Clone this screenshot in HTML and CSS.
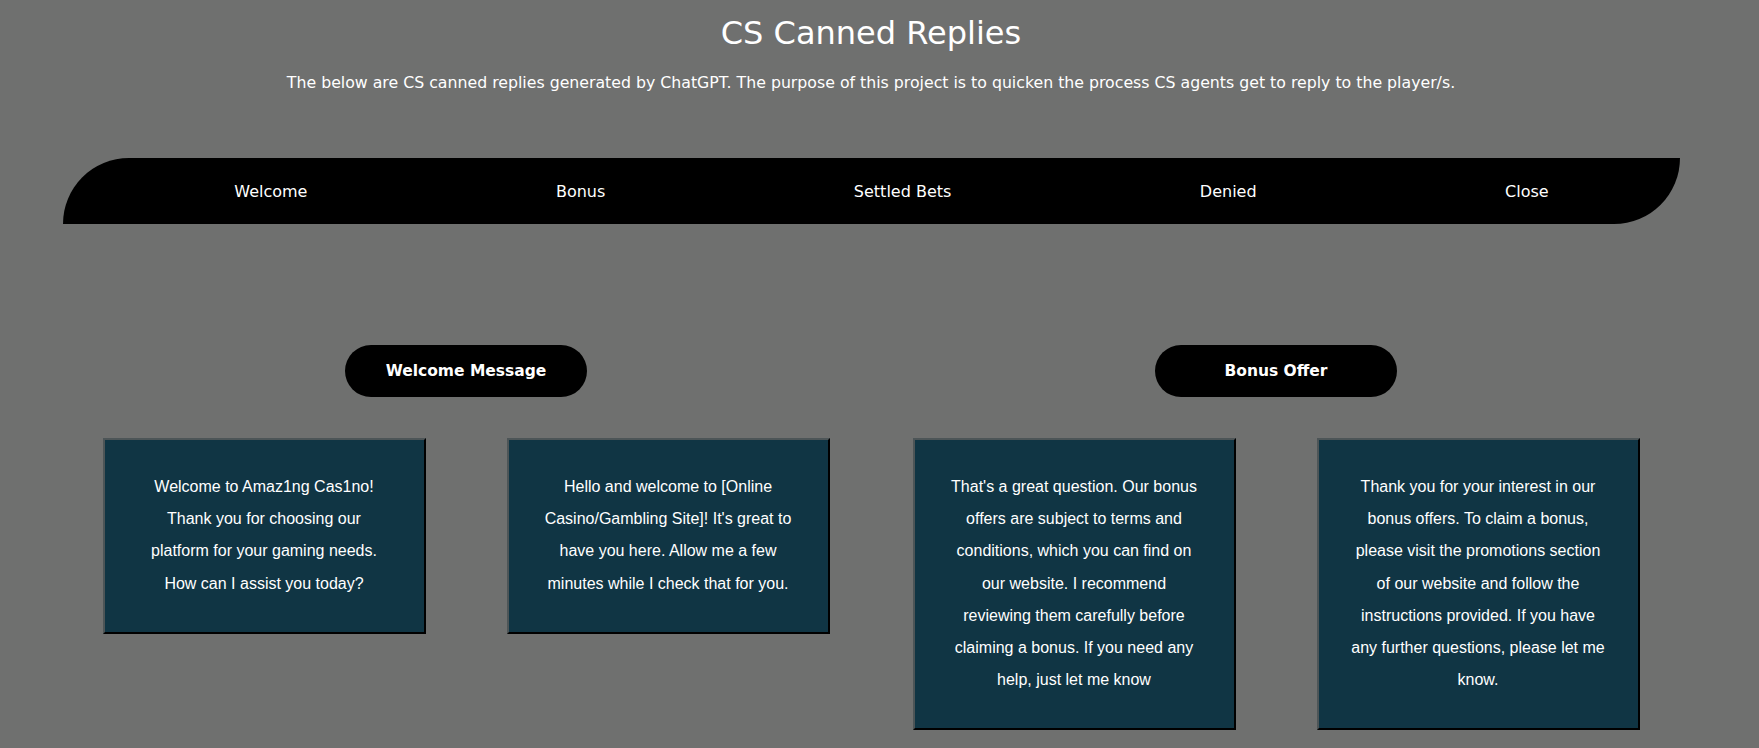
FILE: index.html
```html
<!DOCTYPE html>
<html lang="en">
<head>
<meta charset="utf-8">
<title>CS Canned Replies</title>
<link rel="stylesheet" href="styles.css">
</head>
<body>
<div class="page">
<header class="header">
  <h1 class="title">CS Canned Replies</h1>
  <p class="subtitle">The below are CS canned replies generated by ChatGPT. The purpose of this project is to quicken the process CS agents get to reply to the player/s.</p>
</header>
<nav class="nav">
  <ul class="nav-list">
    <li class="nav-item">Welcome</li>
    <li class="nav-item">Bonus</li>
    <li class="nav-item">Settled Bets</li>
    <li class="nav-item">Denied</li>
    <li class="nav-item">Close</li>
  </ul>
</nav>
<main class="sections">
  <section class="group">
    <h2 class="pill">Welcome Message</h2>
    <div class="cards">
      <div class="card"><p class="card-text">Welcome to Amaz1ng Cas1no! Thank you for choosing our platform for your gaming needs. How can I assist you today?</p></div>
      <div class="card"><p class="card-text">Hello and welcome to [Online Casino/Gambling Site]! It's great to have you here. Allow me a few minutes while I check that for you.</p></div>
    </div>
  </section>
  <section class="group">
    <h2 class="pill">Bonus Offer</h2>
    <div class="cards">
      <div class="card"><p class="card-text">That's a great question. Our bonus offers are subject to terms and conditions, which you can find on our website. I recommend reviewing them carefully before claiming a bonus. If you need any help, just let me know</p></div>
      <div class="card"><p class="card-text">Thank you for your interest in our bonus offers. To claim a bonus, please visit the promotions section of our website and follow the instructions provided. If you have any further questions, please let me know.</p></div>
    </div>
  </section>
</main>
</div>
</body>
</html>
```

FILE: styles.css
```css
html, body {
  margin: 0;
  padding: 0;
}
body {
  background: #6f706f;
  color: #ffffff;
  font-family: "DejaVu Sans", "Open Sans", sans-serif;
  overflow: hidden;
}
.page {
  width: 1742px;
}
.header {
  text-align: center;
  padding-top: 15px;
}
.title {
  margin: 0;
  font-size: 32px;
  line-height: 36px;
  font-weight: 500;
}
.subtitle {
  margin: 22px 0 0;
  font-size: 15.75px;
  line-height: 20px;
}
.nav {
  margin: 65px 62px 0 63px;
  height: 66px;
  background: #000000;
  border-radius: 66px 0 66px 0;
}
.nav-list {
  list-style: none;
  margin: 0;
  padding: 0 7px 0 47px;
  height: 100%;
  display: flex;
  align-items: center;
  justify-content: space-around;
}
.nav-item {
  font-size: 16px;
  color: #ffffff;
}
.sections {
  display: flex;
  align-items: flex-start;
  justify-content: center;
  gap: 83px;
  margin-top: 121px;
}
.group {
  display: flex;
  flex-direction: column;
  align-items: center;
}
.pill {
  margin: 0;
  width: 242px;
  height: 52px;
  border-radius: 26px;
  background: #000000;
  display: flex;
  align-items: center;
  justify-content: center;
  font-size: 15.5px;
  font-weight: 700;
}
.cards {
  display: flex;
  align-items: flex-start;
  gap: 81px;
  margin-top: 41px;
}
.card {
  width: 255px;
  padding: 31px 32px 32px;
  background: #103544;
  border: 2px solid;
  border-color: #4d5557 #000000 #000000 #4d5557;
}
.card-text {
  margin: 0;
  font-family: "Liberation Sans", Arial, sans-serif;
  font-size: 16px;
  line-height: 32.2px;
  text-align: center;
}
```
